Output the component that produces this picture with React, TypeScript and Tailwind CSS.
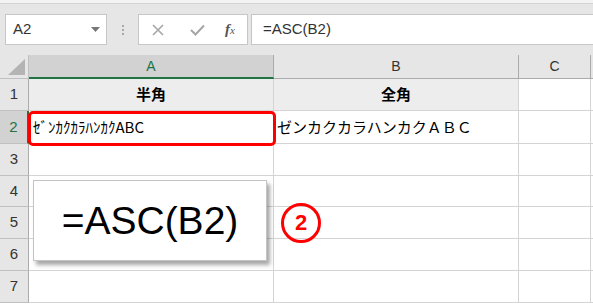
import React from "react";

const ROWS = [
  { n: 1, h: "h-[32px]" },
  { n: 2, h: "h-[33px]" },
  { n: 3, h: "h-[32px]" },
  { n: 4, h: "h-[31px]" },
  { n: 5, h: "h-[32px]" },
  { n: 6, h: "h-[32px]" },
  { n: 7, h: "h-[32px]" },
];

const jp = { fontFamily: '"Noto Sans CJK JP", "Noto Sans", sans-serif' };

function Cell({ n, col }: { n: number; col: "A" | "B" }) {
  const shaded = n === 1;
  let content: React.ReactNode = null;
  if (n === 1) {
    content = (
      <span className="w-full text-center font-bold text-[15px] text-black">
        {col === "A" ? "半角" : "全角"}
      </span>
    );
  } else if (n === 2) {
    content =
      col === "A" ? (
        <span className="pl-[4px] text-[15px] text-black whitespace-nowrap">ｾﾞﾝｶｸｶﾗﾊﾝｶｸABC</span>
      ) : (
        <span className="pl-[3px] text-[15px] text-black whitespace-nowrap">ゼンカクカラハンカクＡＢＣ</span>
      );
  }
  return (
    <div
      style={jp}
      className={`w-[245px] flex items-center border-r border-b border-[#d4d4d4] overflow-visible ${
        shaded ? "bg-[#ededed]" : "bg-white"
      }`}
    >
      {content}
    </div>
  );
}

export default function App() {
  return (
    <div
      className="relative w-[593px] h-[306px] overflow-hidden bg-white"
      style={{ fontFamily: '"Liberation Sans", Arial, sans-serif' }}
    >
      {/* Ribbon edge + formula bar */}
      <div className="h-[3px] bg-[#f3f3f3]" />
      <div className="h-[52px] bg-[#e6e6e6] border-t border-[#d4d4d4] flex items-start pt-[10px] pl-[5px]">
        <div className="w-[102px] h-[31px] bg-white border border-[#c6c6c6] flex items-center justify-between pl-[7px] pr-[6px]">
          <span className="text-[15px] text-[#333]">A2</span>
          <svg width="9" height="5" viewBox="0 0 9 5">
            <path d="M0 0 L9 0 L4.5 5 Z" fill="#777" />
          </svg>
        </div>
        <div className="w-[31px] h-[31px] flex flex-col items-center justify-center gap-[2px]">
          <span className="w-[2px] h-[2px] bg-[#a8a8a8]" />
          <span className="w-[2px] h-[2px] bg-[#a8a8a8]" />
          <span className="w-[2px] h-[2px] bg-[#a8a8a8]" />
        </div>
        <div className="w-[110px] h-[31px] bg-white border border-[#c6c6c6] flex items-center">
          <svg className="ml-[13px]" width="12" height="12" viewBox="0 0 12 12">
            <path d="M1 1 L11 11 M11 1 L1 11" stroke="#a6a6a6" strokeWidth="1.6" />
          </svg>
          <svg className="ml-[26px]" width="15" height="12" viewBox="0 0 15 12">
            <path d="M1 6 L5.5 10.5 L14 1.5" stroke="#a6a6a6" strokeWidth="2" fill="none" />
          </svg>
          <span
            className="ml-[20px] text-[15px] italic text-[#555]"
            style={{ fontFamily: '"Liberation Serif", "Times New Roman", serif' }}
          >
            <span className="font-bold">f</span>
            <span className="text-[11px]">x</span>
          </span>
        </div>
        <div className="ml-[3px] flex-1 h-[31px] bg-white border border-[#c6c6c6] border-r-0 flex items-center pl-[11px]">
          <span className="text-[15px] text-[#333]">=ASC(B2)</span>
        </div>
      </div>

      {/* Column headers */}
      <div className="flex h-[24px]">
        <div className="w-[29px] bg-[#e6e6e6] border-r border-b border-[#c0c0c0] flex items-end justify-end pr-[3px] pb-[3px]">
          <svg width="17" height="16" viewBox="0 0 17 16">
            <path d="M17 0 L17 16 L0 16 Z" fill="#b4b4b4" />
          </svg>
        </div>
        <div className="w-[245px] bg-[#d2d2d2] border-r border-[#ababab] border-b-2 border-b-[#217346] flex items-center justify-center text-[14px] text-[#217346]">
          A
        </div>
        <div className="w-[245px] bg-[#e6e6e6] border-r border-b border-[#ababab] flex items-center justify-center text-[14px] text-[#333]">
          B
        </div>
        <div className="w-[72px] bg-[#e6e6e6] border-r border-b border-[#ababab] flex items-center justify-center text-[14px] text-[#333]">
          C
        </div>
        <div className="flex-1 bg-[#e6e6e6] border-b border-[#ababab]" />
      </div>

      {/* Rows */}
      {ROWS.map((r) => {
        const sel = r.n === 2;
        return (
          <div key={r.n} className={`flex ${r.h}`}>
            <div
              className={`w-[29px] flex items-center justify-center border-b border-[#c0c0c0] text-[15px] ${
                sel
                  ? "bg-[#d2d2d2] border-r-2 border-r-[#217346] text-[#217346]"
                  : "bg-[#e6e6e6] border-r border-r-[#ababab] text-[#333]"
              }`}
            >
              {r.n}
            </div>
            <Cell n={r.n} col="A" />
            <Cell n={r.n} col="B" />
            <div className="w-[72px] border-r border-b border-[#d4d4d4]" />
            <div className="flex-1 border-b border-[#d4d4d4]" />
          </div>
        );
      })}

      {/* Annotation: red highlight around A2 */}
      <div className="absolute left-[28px] top-[111px] w-[248px] h-[35px] border-[3px] border-[#ff0000] rounded-[5px]" />

      {/* Formula callout */}
      <div className="absolute left-[33px] top-[180px] w-[234px] h-[81px] bg-white border border-[#c4c4c4] shadow-[3px_4px_4px_rgba(0,0,0,0.35)] flex items-center justify-center">
        <span className="text-[39px] text-black leading-none">=ASC(B2)</span>
      </div>

      {/* Step marker */}
      <div className="absolute left-[281px] top-[203px] w-[40px] h-[40px] rounded-full border-[3px] border-[#ff0000] flex items-center justify-center">
        <span className="text-[22px] font-bold text-[#ff0000] leading-none">2</span>
      </div>
    </div>
  );
}
